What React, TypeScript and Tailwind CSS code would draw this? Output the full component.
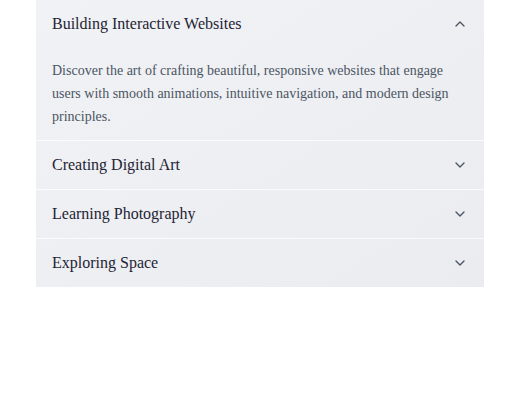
import { useState } from "react";
import { ChevronDown, ChevronUp } from "lucide-react";

type Item = {
  title: string;
  body: string;
};

const items: Item[] = [
  {
    title: "Building Interactive Websites",
    body: "Discover the art of crafting beautiful, responsive websites that engage users with smooth animations, intuitive navigation, and modern design principles.",
  },
  {
    title: "Creating Digital Art",
    body: "Learn to sketch, paint and compose illustrations with digital brushes, layers and color palettes.",
  },
  {
    title: "Learning Photography",
    body: "Master exposure, composition and lighting to capture moments that tell a story.",
  },
  {
    title: "Exploring Space",
    body: "Journey through planets, stars and galaxies and the missions that study them.",
  },
];

export default function App() {
  const [open, setOpen] = useState<number | null>(0);

  return (
    <div className="min-h-[400px] bg-white font-['Liberation_Serif','Times_New_Roman',serif]">
      <div className="mx-auto w-[448px] divide-y divide-white/70 bg-gradient-to-br from-[#f1f2f5] to-[#ebecf0]">
        {items.map((item, i) => {
          const isOpen = open === i;
          return (
            <div key={item.title}>
              <button
                type="button"
                onClick={() => setOpen(isOpen ? null : i)}
                className="flex h-12 w-full items-center justify-between px-4 text-left text-base leading-6 text-[#1e2433]"
              >
                <span>{item.title}</span>
                {isOpen ? (
                  <ChevronUp className="h-4 w-4 text-[#4b5563]" strokeWidth={2} />
                ) : (
                  <ChevronDown className="h-4 w-4 text-[#4b5563]" strokeWidth={2} />
                )}
              </button>
              {isOpen && (
                <p className="px-4 pb-3 pt-[11px] text-sm leading-[23px] text-[#4b5563]">
                  {item.body}
                </p>
              )}
            </div>
          );
        })}
      </div>
    </div>
  );
}
